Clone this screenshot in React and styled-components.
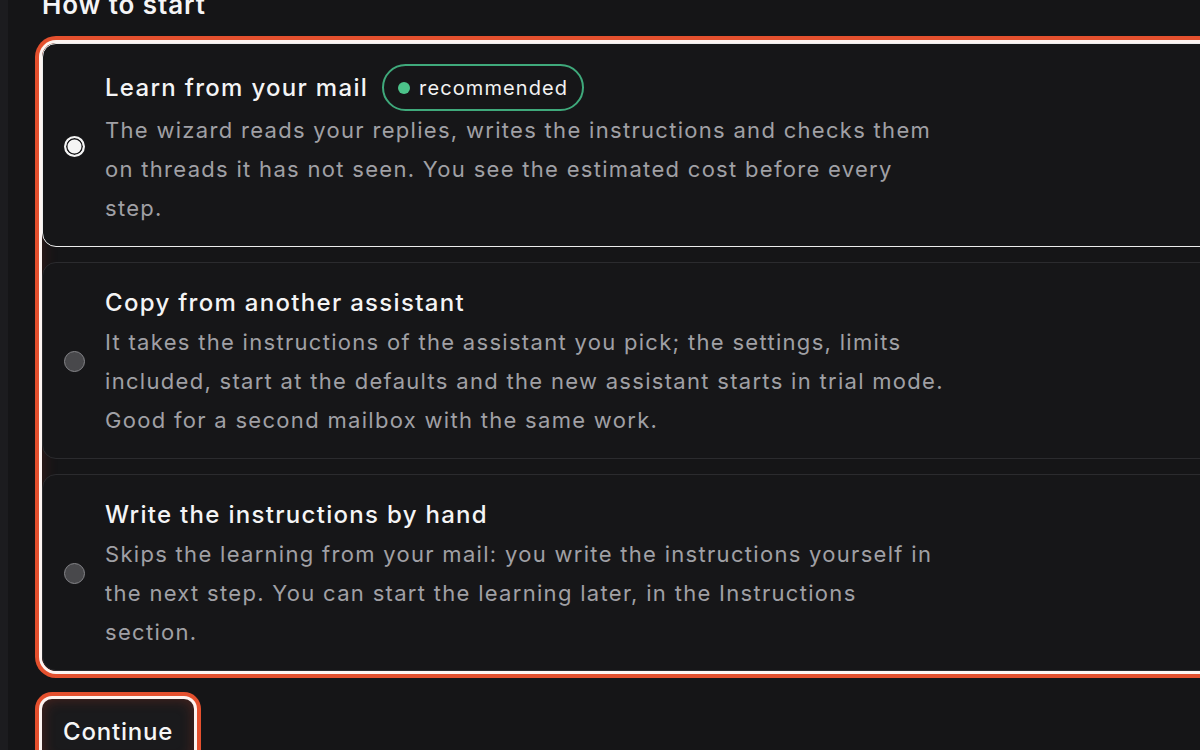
import styled, { createGlobalStyle } from 'styled-components'
import { useState } from 'react'

const GlobalStyle = createGlobalStyle`
html, body {
  margin: 0;
  padding: 0;
  background: #151517;
  overflow: hidden;
}
body {
  font-family: Inter, "Noto Sans", sans-serif;
  color: #f2f2f3;
}
`

const Page = styled.div`
display: flex;
height: 750px;
overflow: hidden;
`
const Rail = styled.div`
width: 8px;
flex-shrink: 0;
background: #1c1c1f;
`
const Main = styled.main`
flex: 1;
padding-left: 34px;
`
const Heading = styled.h2`
margin: -11px 0 22px;
font-size: 26px;
line-height: 32px;
font-weight: 600;
letter-spacing: 0.9px;
color: #f5f5f6;
`
const Group = styled.div`
width: 1200px;
display: flex;
flex-direction: column;
gap: 15px;
border-radius: 14px;
box-shadow: 0 0 0 3px #fdf4f1, 0 0 0 7px #e4502e, inset 0 0 16px rgba(200, 60, 35, 0.22);
`
const Card = styled.label`
display: flex;
align-items: center;
gap: 20px;
padding: 20px 24px 18px 21px;
border-radius: 14px;
border: 1.5px solid ${p => (p.$selected ? '#ececec' : '#2b2b2e')};
background: #161618;
cursor: pointer;
`
const Radio = styled.span`
flex-shrink: 0;
width: 21px;
height: 21px;
border-radius: 50%;
box-sizing: border-box;
border: ${p => (p.$on ? '2px solid #f4f4f4' : '1.5px solid #858589')};
background: ${p => (p.$on ? '#f4f4f4' : '#48484b')};
box-shadow: ${p => (p.$on ? 'inset 0 0 0 1.5px #161618' : 'none')};
`
const Body = styled.div`
display: flex;
flex-direction: column;
`
const TitleRow = styled.div`
display: flex;
align-items: center;
gap: 14px;
min-height: 40px;
`
const Title = styled.span`
font-size: 24px;
line-height: 32px;
font-weight: 450;
letter-spacing: 1.3px;
color: #f4f4f5;
`
const Badge = styled.span`
display: inline-flex;
align-items: center;
gap: 9px;
height: 47px;
box-sizing: border-box;
padding: 0 14px 0 14px;
border: 2px solid #3fa97b;
border-radius: 999px;
font-size: 20px;
letter-spacing: 1.1px;
color: #f2f2f2;
`
const Dot = styled.span`
width: 12px;
height: 12px;
border-radius: 50%;
background: #4cc38a;
`
const Desc = styled.p`
margin: 0;
max-width: 850px;
font-size: 22px;
line-height: 39px;
color: #a0a0a5;
letter-spacing: 1.3px;
`
const Continue = styled.button`
margin-top: 28px;
padding: 17px 21px 15px;
font-family: inherit;
font-size: 24px;
line-height: 32px;
font-weight: 450;
letter-spacing: 0.8px;
color: #f6f6f6;
background: #1a1a1c;
border: none;
border-radius: 10px;
box-shadow: 0 0 0 3px #fdf4f1, 0 0 0 7px #e4502e, inset 0 0 14px rgba(200, 60, 35, 0.3);
cursor: pointer;
`

const options = [
  {
    id: 'learn',
    title: 'Learn from your mail',
    badge: 'recommended',
    text: 'The wizard reads your replies, writes the instructions and checks them on threads it has not seen. You see the estimated cost before every step.',
  },
  {
    id: 'copy',
    title: 'Copy from another assistant',
    text: 'It takes the instructions of the assistant you pick; the settings, limits included, start at the defaults and the new assistant starts in trial mode. Good for a second mailbox with the same work.',
  },
  {
    id: 'manual',
    title: 'Write the instructions by hand',
    text: 'Skips the learning from your mail: you write the instructions yourself in the next step. You can start the learning later, in the Instructions section.',
  },
]

export default function App() {
  const [choice, setChoice] = useState('learn')
  return (
    <>
      <GlobalStyle />
      <Page>
        <Rail />
        <Main>
          <Heading>How to start</Heading>
          <Group role="radiogroup">
            {options.map(o => (
              <Card key={o.id} $selected={choice === o.id} onClick={() => setChoice(o.id)}>
                <Radio $on={choice === o.id} />
                <Body>
                  <TitleRow>
                    <Title>{o.title}</Title>
                    {o.badge && (
                      <Badge>
                        <Dot />
                        {o.badge}
                      </Badge>
                    )}
                  </TitleRow>
                  <Desc>{o.text}</Desc>
                </Body>
              </Card>
            ))}
          </Group>
          <Continue>Continue</Continue>
        </Main>
      </Page>
    </>
  )
}
